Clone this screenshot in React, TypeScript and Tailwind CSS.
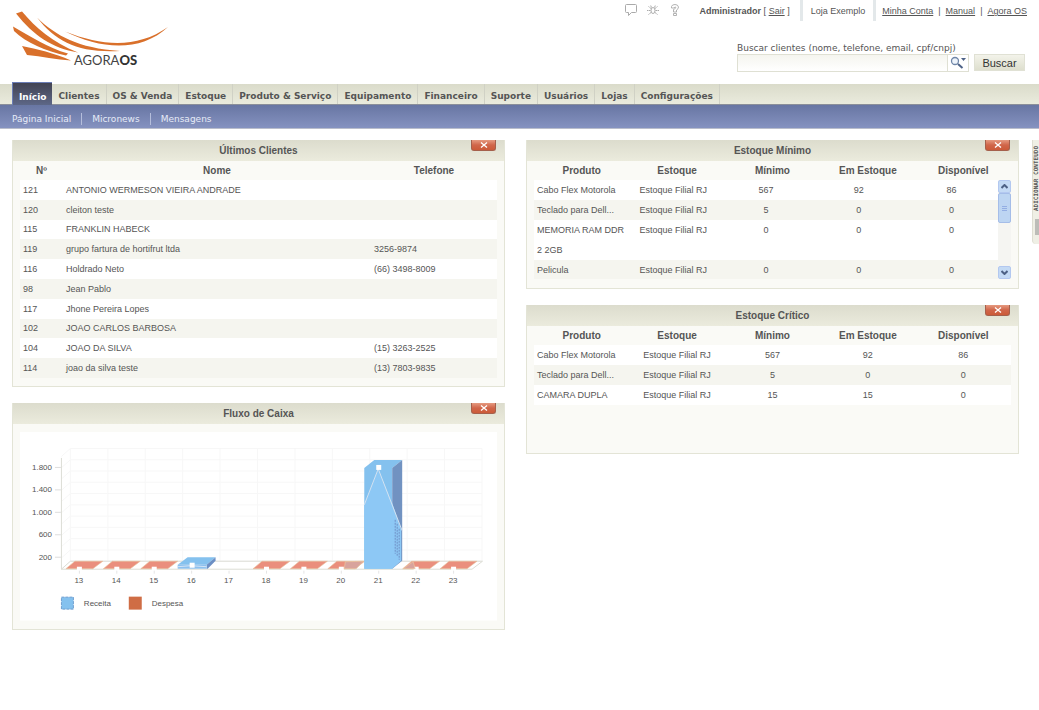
import React from 'react';

const menu = [
  'Início',
  'Clientes',
  'OS & Venda',
  'Estoque',
  'Produto & Serviço',
  'Equipamento',
  'Financeiro',
  'Suporte',
  'Usuários',
  'Lojas',
  'Configurações',
];

const clientes = [
  ['121', 'ANTONIO WERMESON VIEIRA ANDRADE', ''],
  ['120', 'cleiton teste', ''],
  ['115', 'FRANKLIN HABECK', ''],
  ['119', 'grupo fartura de hortifrut ltda', '3256-9874'],
  ['116', 'Holdrado Neto', '(66) 3498-8009'],
  ['98', 'Jean Pablo', ''],
  ['117', 'Jhone Pereira Lopes', ''],
  ['102', 'JOAO CARLOS BARBOSA', ''],
  ['104', 'JOAO DA SILVA', '(15) 3263-2525'],
  ['114', 'joao da silva teste', '(13) 7803-9835'],
];

const estoqueMinimo = [
  ['Cabo Flex Motorola', 'Estoque Filial RJ', '567', '92', '86'],
  ['Teclado para Dell...', 'Estoque Filial RJ', '5', '0', '0'],
  ['MEMORIA RAM DDR 2 2GB', 'Estoque Filial RJ', '0', '0', '0'],
  ['Pelicula', 'Estoque Filial RJ', '0', '0', '0'],
];

const estoqueCritico = [
  ['Cabo Flex Motorola', 'Estoque Filial RJ', '567', '92', '86'],
  ['Teclado para Dell...', 'Estoque Filial RJ', '5', '0', '0'],
  ['CAMARA DUPLA', 'Estoque Filial RJ', '15', '15', '0'],
];

const stockHeads = ['Produto', 'Estoque', 'Mínimo', 'Em Estoque', 'Disponível'];

const Logo: React.FC = () => (
  <svg className="h-[60px] w-[160px]" viewBox="0 0 160 60" role="img" aria-label="Agora OS">
    <g fill="#d9702b">
      <path d="M4 3.500 L10 1.500 C24 18 40 32 66 42.500 C40 38 22 26 4 3.500 Z" />
      <path d="M1 16.500 C18 26 36 38 56 43.500 L54 45.500 C34 41 14 33 2 21 Z" />
      <path d="M10 36 C25 39 42 43 59 50.500 C44 49.500 30 46.500 15 45 Z" />
      <path d="M25 7.500 C44 26 66 38 108 41 C66 43 44 32 25 7.500 Z" />
      <path d="M53 21.500 C92 37 126 38 156 17 C128 43 88 39 53 21.500 Z" />
    </g>
    <text x="62" y="55" fontFamily="Lato, sans-serif" fontSize="13" fill="#444">
      AGORA
      <tspan fontWeight="900" fill="#333">OS</tspan>
    </text>
  </svg>
);

const Panel: React.FC<{ title: string; className?: string; children: React.ReactNode }> = ({
  title,
  className = '',
  children,
}) => (
  <section className={`border border-t-0 border-[#e3e4d6] bg-[#fafaf6] ${className}`}>
    <header className="relative h-[21px] bg-linear-to-b from-[#dcdccd] to-[#ebebdd]">
      <h2 className="text-center text-[10px] leading-[22px] font-bold">{title}</h2>
      <button
        type="button"
        aria-label={`Fechar ${title}`}
        className="absolute top-0 right-2 flex h-[11px] w-[25px] items-center justify-center rounded-b-[3px] border border-t-0 border-[#a5604c] bg-linear-to-b from-[#e59a80] via-[#d0664a] to-[#cc5a38]"
      >
        <svg className="h-[6px] w-[8px]" viewBox="0 0 8 6" stroke="#fff" strokeWidth="1.3">
          <path d="M1 .5 7 5.5M7 .5 1 5.5" />
        </svg>
      </button>
    </header>
    {children}
  </section>
);

const StockHead: React.FC = () => (
  <thead>
    <tr className="h-[19px]">
      {stockHeads.map((h) => (
        <th key={h} scope="col" className="text-center text-[10px] font-bold">
          {h}
        </th>
      ))}
    </tr>
  </thead>
);

const StockRows: React.FC<{ rows: string[][] }> = ({ rows }) => (
  <tbody>
    {rows.map((row) => (
      <tr key={row[0]} className="bg-white align-top even:bg-[#f5f5ef]">
        {row.map((cell, i) => (
          <td key={i} className={i === 0 ? 'pl-[3px] leading-5' : 'text-center leading-5'}>
            {cell}
          </td>
        ))}
      </tr>
    ))}
  </tbody>
);

/* Cash flow chart, 478 x 189 */
const days = [13, 14, 15, 16, 17, 18, 19, 20, 21, 22, 23];
const expenseDays = [13, 14, 15, 18, 19, 20, 22, 23];
const scale = ['1.800', '1.400', '1.000', '600', '200'];

const Chart: React.FC = () => (
  <svg
    className="block w-full"
    viewBox="0 0 478 189"
    role="img"
    aria-label="Fluxo de Caixa"
    fontFamily="Liberation Sans, Arial, sans-serif"
    fontSize="8"
    fill="#555"
  >
    <rect width="478" height="189" fill="#fff" />
    <g stroke="#f7f7f7" fill="none">
      {Array.from({ length: 11 }, (_, i) => (
        <path key={i} d={`M41.5 ${137.5 - i * 11.3}L50.5 ${129.5 - i * 11.3}H463`} />
      ))}
      {Array.from({ length: 12 }, (_, i) => (
        <path key={i} d={`M${50.5 + i * 37.5} 16.5V129`} />
      ))}
    </g>
    <path d="M41.5 26V137.5M41.5 137.5L50.5 129.5H463.5L453 137.5Z" fill="none" stroke="#dcddd5" />
    {scale.map((s, i) => (
      <g key={s}>
        <path d={`M35 ${35.5 + i * 22.5}h6`} stroke="#ddd" />
        <text x="32" y={38 + i * 22.5} textAnchor="end">
          {s}
        </text>
      </g>
    ))}
    {days.map((d, i) => {
      const x = 59 + i * 37.5;
      return (
        <g key={d}>
          {expenseDays.includes(d) && (
            <>
              <path
                d={`M${x - 13} 137L${x - 4} 129.5H${x + 24}L${x + 14} 137Z`}
                fill="#ea8f7d"
                stroke="#e8c39d"
                strokeWidth=".6"
              />
              <rect x={x - 2} y="135" width="5" height="4" fill="#fff" />
            </>
          )}
          <path d={`M${x + 0.5} 139v3`} stroke="#e5e5e5" />
          <text x={x} y="151" textAnchor="middle">
            {d}
          </text>
        </g>
      );
    })}
    <path d="M326 130L344 129.5L337 137H325Z" fill="#d8a39c" stroke="#eccfa5" strokeWidth=".6" />
    <path d="M384 137L394 130L396 137Z" fill="#d8a39c" stroke="#eccfa5" strokeWidth=".6" />

    {/* day 16 */}
    <path d="M158 133L168 125.500H196L187 133Z" fill="#84c1ee" />
    <path d="M187 133L196 125.500V129L188 137H187Z" fill="#6c8fc4" />
    <path d="M158 133H187V137H158Z" fill="#8cc0ee" />
    <path d="M158 135L171 134L187 135" fill="none" stroke="#d5e5f5" />
    <rect x="170" y="131" width="5" height="5" fill="#fff" />

    {/* day 21 */}
    <path d="M345 36L355 28H383L373 36V137H345Z" fill="#84c1ee" />
    <path d="M373 36L383 28V129L373 137Z" fill="#7192c1" />
    <path d="M345 73L359 38L373 71L382 98V129L373 137H345Z" fill="#8dc8f5" />
    <path d="M376 88V122M378 92V125M380 97V128" stroke="#6f91c7" strokeDasharray="2 1" />
    <path d="M345 73L359 37L383 99" fill="none" stroke="#d3e2f1" />
    <rect x="357" y="33" width="5" height="5" fill="#fff" />

    <rect x="41.500" y="165.500" width="12" height="12" fill="#84c1ee" stroke="#6f9fd0" strokeDasharray="3 1" />
    <text x="64" y="174">
      Receita
    </text>
    <rect x="109" y="165" width="13" height="13" fill="#cf6d45" />
    <text x="132" y="174">
      Despesa
    </text>
  </svg>
);

const TopIcons: React.FC = () => (
  <div className="flex items-start gap-[10px]" aria-hidden="true">
    <svg className="h-3 w-3" viewBox="0 0 12 12" fill="none" stroke="#aaa">
      <path d="M1.500 .5h9q1 0 1 1v6q0 1-1 1h-4l-3 3v-3h-2q-1 0-1-1v-6q0-1 1-1Z" />
    </svg>
    <svg className="h-3 w-3" viewBox="0 0 12 12" fill="none" stroke="#aaa">
      <ellipse cx="6" cy="6.500" rx="2" ry="3" />
      <path
        d="M4 4.500 1.500 2.500M8 4.500l2.500-2M3.500 6.500H0M8.500 6.500H12M4 8.500 1.500 10.500M8 8.500 10.500 10.500M4.500 3.500 3.500 1M7.500 3.500 8.500 1"
        strokeDasharray="2 .5"
      />
    </svg>
    <svg className="h-3 w-3" viewBox="0 0 12 12" fill="none" stroke="#aaa">
      <path
        d="M2.500 4V2.500Q3 .5 6 .5t3.500 2.500Q9.500 5 7.500 6V8h-3V5.500Q7 4.500 6.800 3.300 6 2.300 5 4ZM4.500 9.500h3v2h-3Z"
        strokeWidth=".9"
      />
    </svg>
  </div>
);

const App: React.FC = () => (
  <div className="bg-white font-['Liberation_Sans',Arial,sans-serif] text-[9px] leading-[14px] text-[#555]">
    <div className="flex h-[84px] justify-between px-3">
      <div className="pt-[10px]">
        <Logo />
      </div>

      <div className="flex flex-col items-end">
        <div className="flex items-start">
          <div className="pt-1">
            <TopIcons />
          </div>
          <p className="pt-1 pl-[19px]">
            <b>Administrador</b> [{' '}
            <a href="#sair" className="underline">
              Sair
            </a>{' '}
            ]
          </p>
          <p className="ml-[10px] h-[21px] border-x-[3px] border-[#e3e8ea] px-2 pt-1">Loja Exemplo</p>
          <nav aria-label="Conta" className="flex gap-[5px] pt-1 pl-[6px]">
            <a href="#conta" className="underline">
              Minha Conta
            </a>
            |
            <a href="#manual" className="underline">
              Manual
            </a>
            |
            <a href="#agora" className="underline">
              Agora OS
            </a>
          </nav>
        </div>

        <form className="mt-[22px] mr-[2px]" onSubmit={(e) => e.preventDefault()}>
          <label
            htmlFor="busca"
            className="block font-['DejaVu_Sans',Verdana,sans-serif] text-[9px] leading-[11px]"
          >
            Buscar clientes (nome, telefone, email, cpf/cnpj)
          </label>
          <div className="flex gap-[5px]">
            <div className="flex h-[18px] border border-[#dfe0d3]">
              <input
                id="busca"
                type="text"
                className="w-[209px] bg-linear-to-b from-[#f5f5ef] to-white outline-none"
              />
              <button
                type="button"
                aria-label="Opções de busca"
                className="flex w-[21px] items-center justify-center border-l border-[#dfe0d3]"
              >
                <svg className="h-[14px] w-4" viewBox="0 0 16 14" fill="none">
                  <circle cx="5" cy="5" r="3.500" fill="#eef4fb" stroke="#6f86a8" strokeWidth="1.300" />
                  <path d="M8 8l4.500 4" stroke="#4d6286" strokeWidth="2" />
                  <path d="M11 2h5l-2.500 3Z" fill="#4d6286" />
                </svg>
              </button>
            </div>
            <button
              type="submit"
              className="h-[17px] w-[51px] border border-[#e0e1d4] bg-linear-to-b from-[#f3f3ea] to-[#dedfce] text-[11px] text-[#333]"
            >
              Buscar
            </button>
          </div>
        </form>
      </div>
    </div>

    <nav
      aria-label="Principal"
      className="flex h-[21px] border-b border-[#8b8f99] bg-linear-to-b from-[#dadbca] to-[#eaebdd] pl-3 font-['DejaVu_Sans',Verdana,sans-serif] text-[9px] font-bold"
    >
      {menu.map((m, i) => (
        <a
          key={m}
          href="#menu"
          className={
            i === 0
              ? '-mt-[2px] h-[23px] border-t border-l border-[#6a7cb5] bg-linear-to-b from-[#424353] to-[#5d6787] px-[6px] leading-[28px] text-white'
              : 'border-r border-[#d0d1c5] px-[6px] leading-[24px]'
          }
        >
          {m}
        </a>
      ))}
    </nav>
    <nav
      aria-label="Secundário"
      className="flex h-6 items-center border-b border-[#b9bdcb] bg-linear-to-b from-[#6876a3] to-[#8592c0] pt-1 pl-3 font-['DejaVu_Sans',Verdana,sans-serif] text-[9px] leading-3 text-[#e6ebf7]"
    >
      <a href="#inicial" className="pr-[10px]">
        Página Inicial
      </a>
      <a href="#micronews" className="border-l border-[#b5bedb] px-[10px]">
        Micronews
      </a>
      <a href="#mensagens" className="border-l border-[#b5bedb] px-[10px]">
        Mensagens
      </a>
    </nav>

    <main className="flex items-start pt-[11px] pl-3">
      <div className="grid flex-1 grid-cols-2 items-start gap-x-[21px]">
        <div className="flex flex-col gap-4">
          <Panel title="Últimos Clientes" className="pb-2">
            <div className="px-[7px]">
              <table className="h-[217px] w-full">
                <thead>
                  <tr className="h-[19px] text-[10px]">
                    <th scope="col" className="w-[43px]">
                      Nº
                    </th>
                    <th scope="col">Nome</th>
                    <th scope="col" className="w-[126px]">
                      Telefone
                    </th>
                  </tr>
                </thead>
                <tbody>
                  {clientes.map((c) => (
                    <tr key={c[0]} className="bg-white even:bg-[#f5f5ef]">
                      <td className="pl-[3px]">{c[0]}</td>
                      <td className="pl-[3px]">{c[1]}</td>
                      <td className="pl-[3px]">{c[2]}</td>
                    </tr>
                  ))}
                </tbody>
              </table>
            </div>
          </Panel>

          <Panel title="Fluxo de Caixa">
            <div className="px-[7px] pt-2 pb-2">
              <Chart />
            </div>
          </Panel>
        </div>

        <div className="flex flex-col gap-4">
          <Panel title="Estoque Mínimo" className="h-[149px]">
            <div className="px-[7px]">
              <table className="w-full table-fixed">
                <StockHead />
              </table>
              <div className="flex h-[99px] overflow-hidden">
                <div className="flex-1">
                  <table className="w-full table-fixed">
                    <StockRows rows={estoqueMinimo} />
                  </table>
                </div>
                {/* scrollbar */}
                <div className="flex w-[13px] flex-col justify-between bg-[#f5f5f2]">
                  <div>
                    <button
                      type="button"
                      aria-label="Rolar para cima"
                      className="flex h-[13px] w-full items-center justify-center rounded-[2px] border border-[#b3c8f0] bg-[#c4daf5]"
                    >
                      <svg className="h-[5px] w-[7px]" viewBox="0 0 7 5" fill="none" stroke="#4d6185" strokeWidth="2">
                        <path d="M.5 4 3.500 1 6.500 4" />
                      </svg>
                    </button>
                    <div className="flex h-[30px] flex-col items-center justify-center gap-px rounded-[2px] border border-[#a5bde8] bg-[#bdd5f2]">
                      <span className="h-px w-[5px] bg-[#93aee3]" />
                      <span className="h-px w-[5px] bg-[#93aee3]" />
                      <span className="h-px w-[5px] bg-[#93aee3]" />
                    </div>
                  </div>
                  <button
                    type="button"
                    aria-label="Rolar para baixo"
                    className="flex h-[13px] w-full items-center justify-center rounded-[2px] border border-[#b3c8f0] bg-[#c4daf5]"
                  >
                    <svg className="h-[5px] w-[7px]" viewBox="0 0 7 5" fill="none" stroke="#4d6185" strokeWidth="2">
                      <path d="M.5 1 3.500 4 6.500 1" />
                    </svg>
                  </button>
                </div>
              </div>
            </div>
          </Panel>

          <Panel title="Estoque Crítico" className="h-[149px]">
            <div className="px-[7px]">
              <table className="w-full table-fixed">
                <StockHead />
                <StockRows rows={estoqueCritico} />
              </table>
            </div>
          </Panel>
        </div>
      </div>

      <button
        type="button"
        className="ml-[13px] flex h-[104px] w-[7px] flex-col items-end justify-start gap-2 overflow-hidden rounded-bl-[4px] border-l border-[#deded2] bg-[#efefe5] pt-[6px]"
      >
        <span className="rotate-180 font-['DejaVu_Sans_Mono',monospace] text-[6px] leading-[6px] font-bold [writing-mode:vertical-rl]">
          ADICIONAR CONTEUDO
        </span>
        <span className="h-4 w-[4px] bg-[#bdbdb8]" />
      </button>
    </main>
  </div>
);

export default App;
